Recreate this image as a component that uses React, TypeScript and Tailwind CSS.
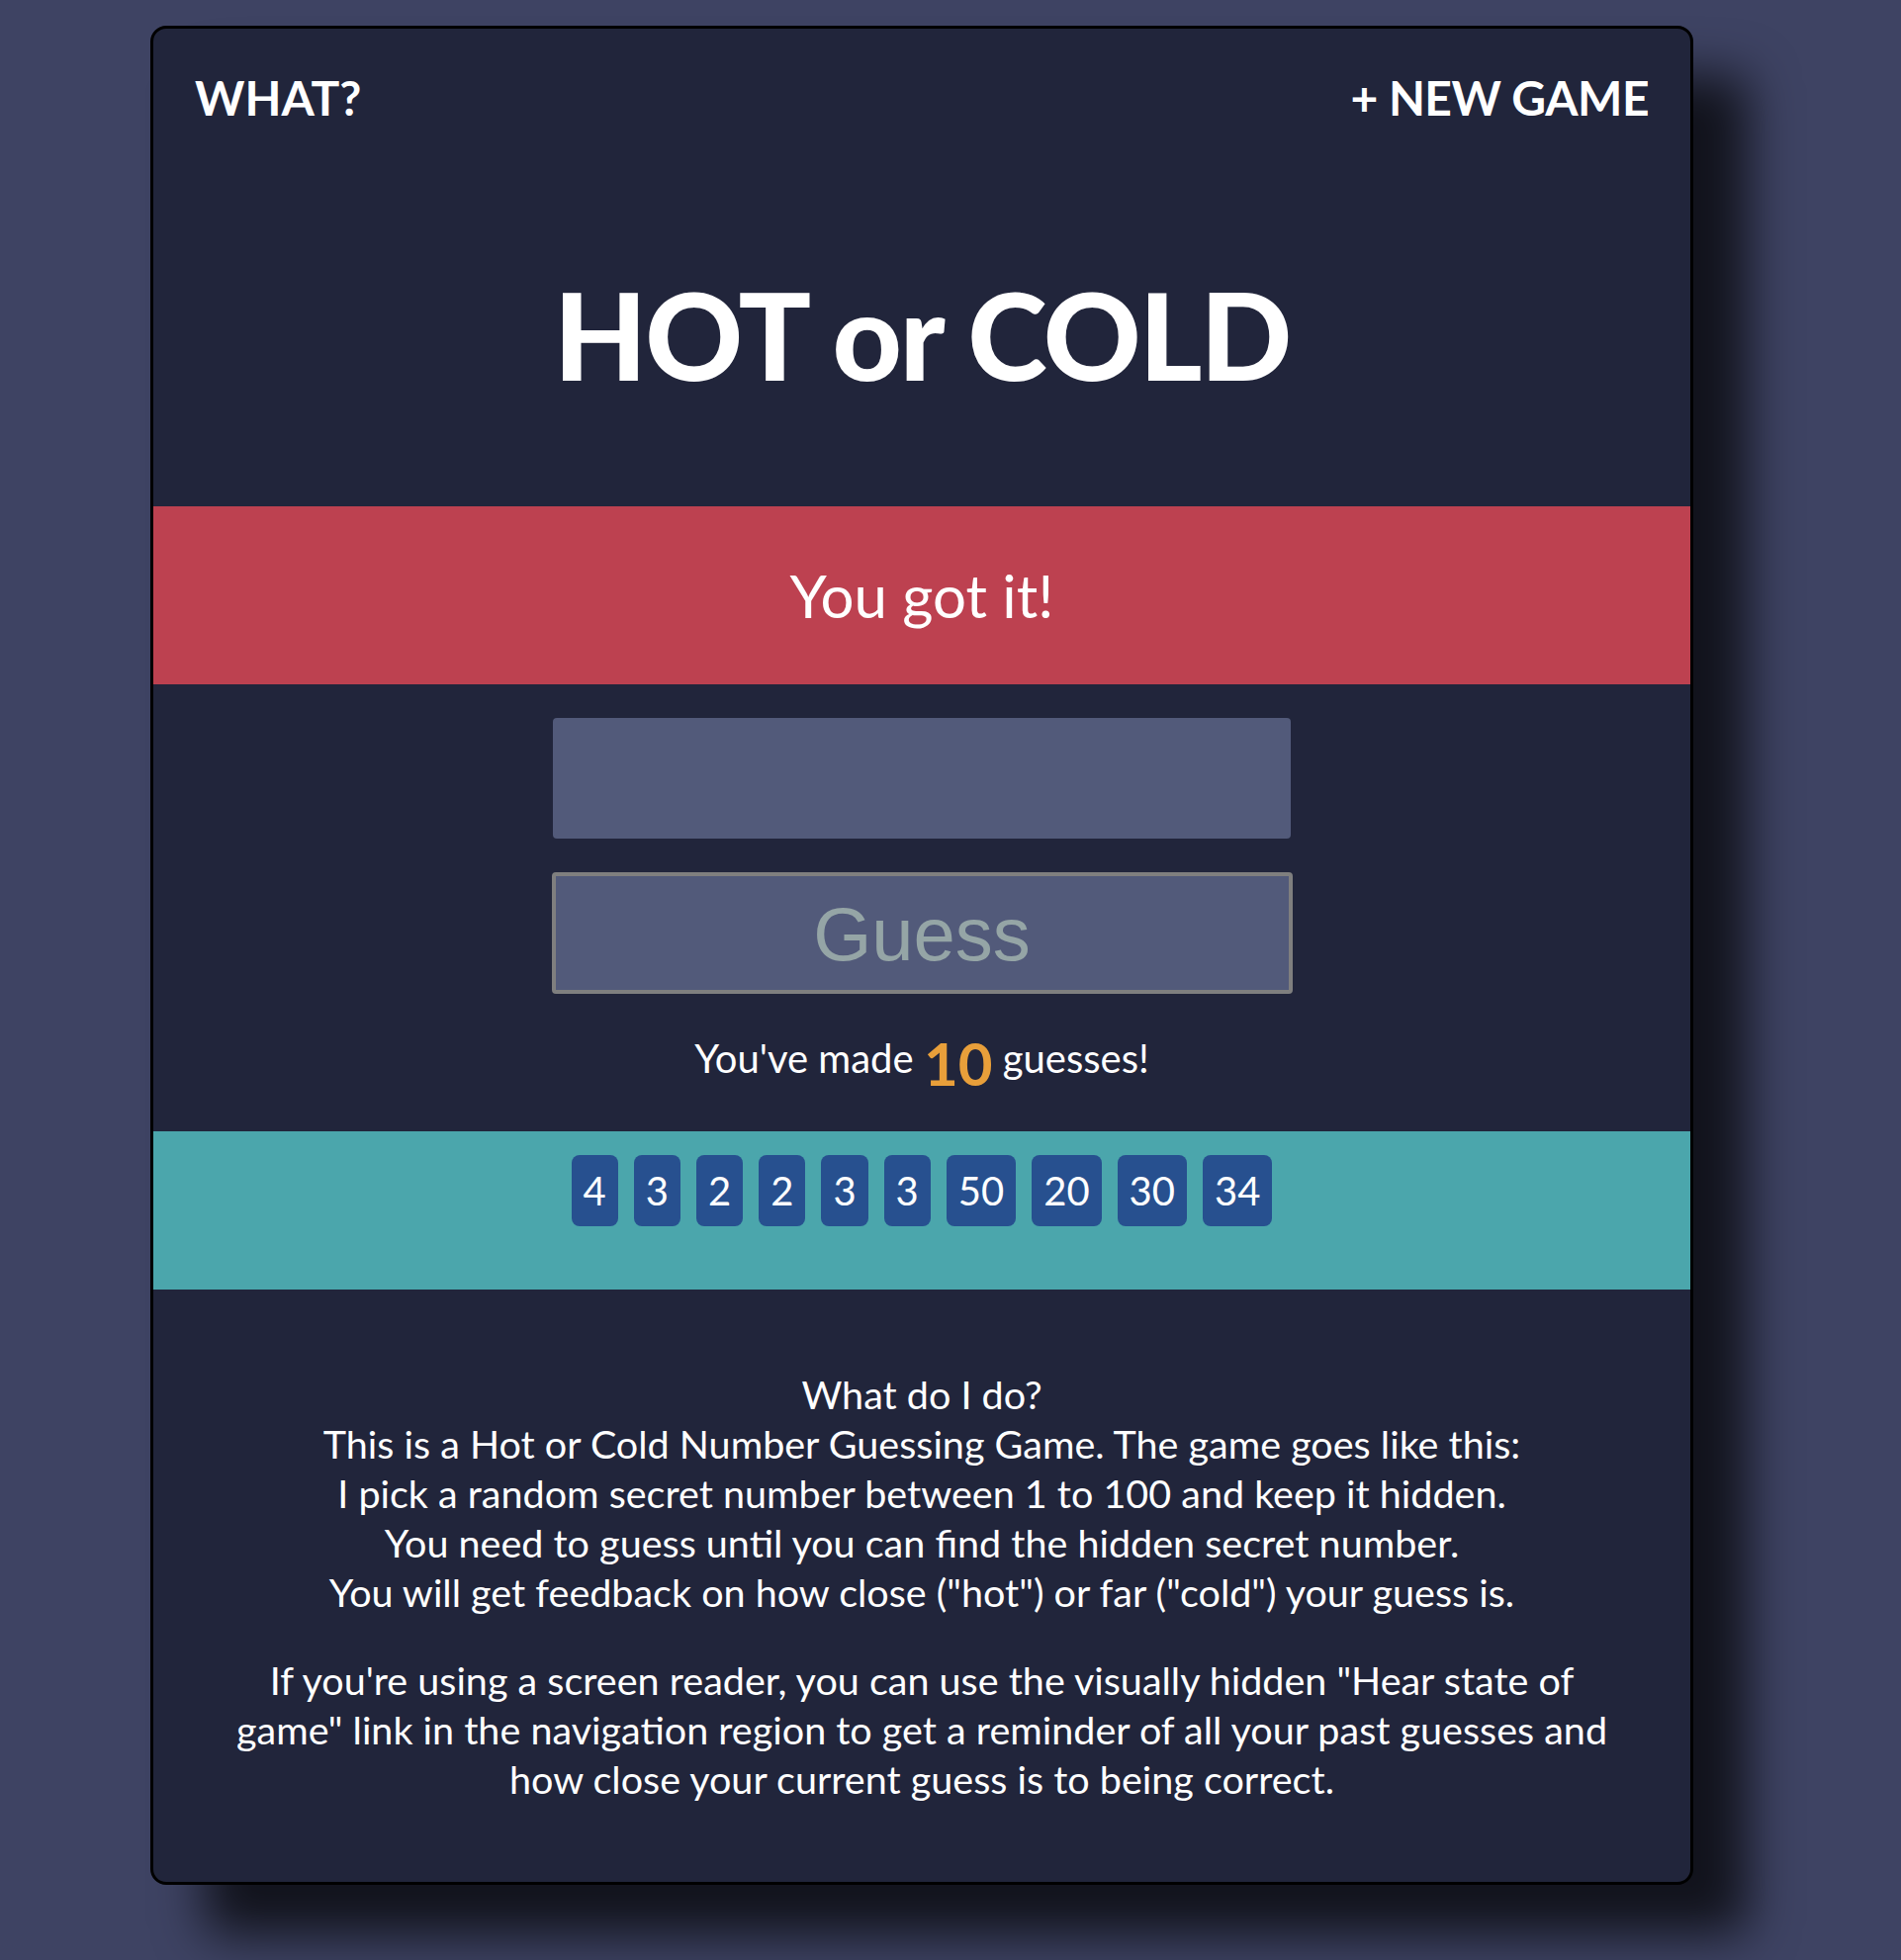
import React from 'react'

const guesses = [4, 3, 2, 2, 3, 3, 50, 20, 30, 34]

const App = () => {
  return (
    <div className="min-h-screen bg-[#3e4363] pt-[26px] pb-[76px] font-['Lato',sans-serif]">
      <div className="ml-[152px] w-[1560px] rounded-2xl border-[3px] border-black bg-[#21253b] shadow-[55px_50px_50px_rgba(0,0,0,0.72)]">
        {/* top nav */}
        <nav className="flex items-center justify-between px-[42px] pt-[41px] text-[48px] font-bold leading-[1.2] text-white">
          <span>WHAT?</span>
          <span className="tracking-[-0.5px]">+ NEW GAME</span>
        </nav>

        <h1 className="mt-[137px] text-center text-[122px] font-black leading-[1.2] tracking-[-2px] text-white">
          HOT or COLD
        </h1>

        <div className="mt-[101px] flex h-[180px] items-center justify-center bg-[#bd4150] text-[60px] text-white">
          You got it!
        </div>

        <div className="flex flex-col items-center">
          <input
            type="text"
            aria-label="guess"
            className="mt-[34px] h-[122px] w-[746px] rounded bg-[#525a7a] outline-none"
          />
          <button className="mt-[34px] h-[123px] w-[749px] rounded border-4 border-[#7f7f7f] bg-[#525a7a] pt-[4px] font-['Liberation_Sans',Arial,sans-serif] text-[76px] leading-none text-[#95a5a6]">
            Guess
          </button>
          <p className="mt-[34px] text-[40px] leading-[1.2] text-white">
            You've made{' '}
            <span className="align-middle text-[60px] font-bold leading-[1.2] text-[#e89f3a]">10</span>{' '}
            guesses!
          </p>
        </div>

        <ul className="mt-[33px] flex h-[160px] items-start justify-center gap-4 bg-[#4ba6ac] pt-6">
          {guesses.map((g, i) => (
            <li
              key={i}
              className="flex h-[72px] items-center rounded-lg bg-[#27508f] px-3 text-[40px] leading-none text-white"
            >
              {g}
            </li>
          ))}
        </ul>

        <div className="px-[40px] pt-[81px] pb-[79px] text-center text-[39.5px] leading-[50px] text-white">
          <p>
            What do I do?
            <br />
            This is a Hot or Cold Number Guessing Game. The game goes like this:
            <br />
            I pick a random secret number between 1 to 100 and keep it hidden.
            <br />
            You need to guess until you can find the hidden secret number.
            <br />
            You will get feedback on how close ("hot") or far ("cold") your guess is.
          </p>
          <p className="mx-auto mt-[39px] max-w-[1410px]">
            If you're using a screen reader, you can use the visually hidden "Hear state of game" link in the
            navigation region to get a reminder of all your past guesses and how close your current guess is to
            being correct.
          </p>
        </div>
      </div>
    </div>
  )
}

export default App
